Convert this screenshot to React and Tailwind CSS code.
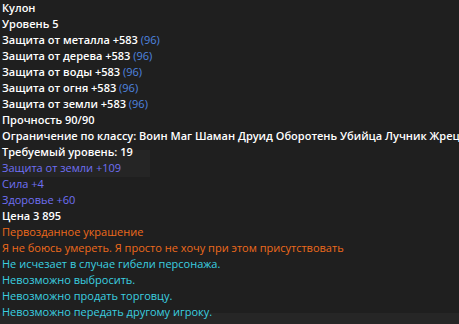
const LINES = [
  { text: "Кулон", cls: "font-semibold text-white" },
  { text: "Уровень 5", cls: "font-semibold text-white" },
  { text: "Защита от металла +583", extra: "(96)", cls: "font-semibold text-white" },
  { text: "Защита от дерева +583", extra: "(96)", cls: "font-semibold text-white" },
  { text: "Защита от воды +583", extra: "(96)", cls: "font-semibold text-white" },
  { text: "Защита от огня +583", extra: "(96)", cls: "font-semibold text-white" },
  { text: "Защита от земли +583", extra: "(96)", cls: "font-semibold text-white" },
  { text: "Прочность 90/90", cls: "font-semibold text-white" },
  {
    text: "Ограничение по классу: Воин Маг Шаман Друид Оборотень Убийца Лучник Жрец",
    cls: "font-semibold text-white",
  },
  { text: "Требуемый уровень: 19", cls: "font-semibold text-white" },
  { text: "Защита от земли +109", cls: "text-[#6f6ff4]" },
  { text: "Сила +4", cls: "text-[#6f6ff4]" },
  { text: "Здоровье +60", cls: "text-[#6f6ff4]" },
  { text: "Цена 3 895", cls: "font-semibold text-white" },
  { text: "Первозданное украшение", cls: "text-[#ee6a1c]" },
  {
    text: "Я не боюсь умереть. Я просто не хочу при этом присутствовать",
    cls: "text-[#ee6a1c]",
  },
  { text: "Не исчезает в случае гибели персонажа.", cls: "text-[#3bd0e0]" },
  { text: "Невозможно выбросить.", cls: "text-[#3bd0e0]" },
  { text: "Невозможно продать торговцу.", cls: "text-[#3bd0e0]" },
  { text: "Невозможно передать другому игроку.", cls: "text-[#3bd0e0]" },
];

export default function App() {
  return (
    <div className="relative h-[324px] w-[459px] overflow-hidden bg-[#1f1f1f] font-['Open_Sans',sans-serif]">
      {/* inventory panel behind the tooltip */}
      <div className="flex h-full flex-col">
        <div className="mt-[150px] h-[27px] w-[150px] bg-[#252525]" />
        <div className="mt-auto h-[11px] bg-[#262626]" />
      </div>

      {/* tooltip */}
      <div className="absolute inset-0 flex flex-col pl-[2px] text-[11px] leading-[16px]">
        {LINES.map((l, i) => (
          <div key={i} className={"whitespace-nowrap " + l.cls}>
            {l.text}
            {l.extra ? <span className="font-normal text-[#4f86e0]"> {l.extra}</span> : null}
          </div>
        ))}
      </div>
    </div>
  );
}
